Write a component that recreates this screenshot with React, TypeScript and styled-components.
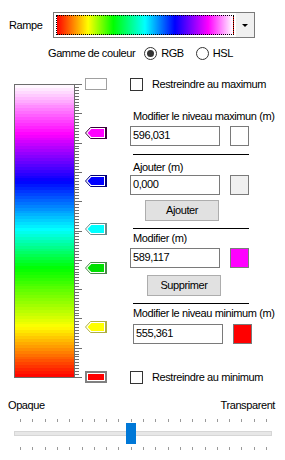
import React from 'react';
import styled, { createGlobalStyle } from 'styled-components';

const GlobalStyle = createGlobalStyle`
  body {
    margin: 0;
    background: #fff;
  }
  * {
    box-sizing: border-box;
  }
`;

// Fenêtre principale
const Window = styled.div`
  width: 285px;
  height: 460px;
  overflow: hidden;
  background: #fff;
  font-family: 'Liberation Sans', Arial, sans-serif;
  font-size: 11px;
  letter-spacing: -0.4px;
  line-height: 13px;
  color: #000;
  display: flex;
  flex-direction: column;
`;

const RampRow = styled.div`
  display: flex;
  align-items: center;
  padding: 12px 0 0 9px;
`;

const RampLabel = styled.span`
  width: 44px;
`;

const Combo = styled.div`
  width: 202px;
  height: 26px;
  border: 1px solid #7a7a7a;
  display: flex;
  align-items: stretch;
  background: #fff;
`;

const ComboPreview = styled.div`
  flex: 1;
  margin: 2px;
  border: 1px dotted #000;
  background: linear-gradient(
    to right,
    #ff0000 0%,
    #ffff00 17.7%,
    #00ff00 32%,
    #00ffff 50%,
    #0000ff 67%,
    #ff00ff 86%,
    #ffffff 100%
  );
`;

const ComboButton = styled.div`
  width: 18px;
  background: #f0f0f0;
  display: flex;
  align-items: center;
  justify-content: center;

  &::after {
    content: '';
    width: 0;
    height: 0;
    border-left: 3px solid transparent;
    border-right: 3px solid transparent;
    border-top: 3px solid #000;
  }
`;

const GammeRow = styled.div`
  display: flex;
  align-items: center;
  height: 13px;
  margin-top: 9px;
  padding-left: 48px;
`;

const RadioItem = styled.label<{ $first?: boolean }>`
  display: flex;
  align-items: center;
  gap: 4px;
  margin-left: ${(p) => (p.$first ? '9px' : '12px')};
`;

const RadioCircle = styled.span<{ $checked?: boolean }>`
  width: 13px;
  height: 13px;
  border: 1px solid #333;
  border-radius: 50%;
  display: flex;
  align-items: center;
  justify-content: center;
  background: #fff;

  &::after {
    content: '';
    width: 7px;
    height: 7px;
    border-radius: 50%;
    background: ${(p) => (p.$checked ? '#333' : 'transparent')};
  }
`;

const Main = styled.div`
  display: flex;
  margin-top: 18px;
  height: 310px;
`;

const ScaleArea = styled.div`
  position: relative;
  width: 130px;
  flex: none;
`;

const BarRow = styled.div`
  display: flex;
  margin: 6px 0 0 14px;
`;

const Bar = styled.div`
  width: 61px;
  height: 294px;
  border: 1px solid #6d6d6d;
`;

const Marker = styled.svg`
  position: absolute;
  left: 85px;
`;

const Panel = styled.div`
  display: flex;
  flex-direction: column;
  width: 155px;
`;

const CheckRow = styled.label<{ $top?: number }>`
  display: flex;
  align-items: center;
  height: 13px;
  margin-top: ${(p) => p.$top ?? 0}px;
`;

const CheckBox = styled.span`
  width: 13px;
  height: 13px;
  border: 1px solid #333;
  background: #fff;
  margin-right: 9px;
`;

const FieldLabel = styled.div<{ $top: number }>`
  margin-top: ${(p) => p.$top}px;
  padding-left: 3px;
`;

const FieldRow = styled.div<{ $top: number; $indent?: number }>`
  display: flex;
  align-items: stretch;
  margin-top: ${(p) => p.$top}px;
  padding-left: ${(p) => p.$indent ?? 0}px;
  height: 20px;
`;

const TextBox = styled.div`
  width: 90px;
  border: 1px solid #7a7a7a;
  background: #fff;
  padding: 2px 0 0 2px;
`;

const Swatch = styled.div<{ $color: string }>`
  width: 19px;
  margin-left: ${(p) => 10 - 0}px;
  border: 1px solid #7a7a7a;
  background: ${(p) => p.$color};
`;

const Separator = styled.div<{ $top: number }>`
  margin: ${(p) => p.$top}px 0 0 3px;
  width: 116px;
  height: 1px;
  background: #000;
`;

const Button = styled.button<{ $top: number; $indent: number }>`
  align-self: flex-start;
  margin: ${(p) => p.$top}px 0 0 ${(p) => p.$indent}px;
  width: 74px;
  height: 21px;
  padding: 0;
  border: 1px solid #adadad;
  background: #e1e1e1;
  font: inherit;
  letter-spacing: inherit;
  color: #000;
`;

const OpacityLabels = styled.div`
  display: flex;
  justify-content: space-between;
  margin-top: 11px;
  padding: 0 10px 0 8px;
`;

const Slider = styled.div`
  position: relative;
  display: flex;
  flex-direction: column;
  padding: 0 13px 0 14px;
`;

const SliderTicks = styled.svg<{ $top: number }>`
  display: block;
  margin-top: ${(p) => p.$top}px;
`;

const Track = styled.div`
  margin-top: 9px;
  height: 5px;
  border: 1px solid #d6d6d6;
  background: #e7e7e7;
`;

const Thumb = styled.div`
  position: absolute;
  top: 11px;
  width: 10px;
  height: 21px;
  background: #0078d7;
`;

// Palette de la rampe (haut -> bas)
const stops: [number, [number, number, number]][] = [
  [0, [255, 255, 255]],
  [0.167, [255, 0, 255]],
  [0.331, [0, 0, 255]],
  [0.495, [0, 255, 255]],
  [0.628, [0, 255, 0]],
  [0.829, [255, 255, 0]],
  [1, [255, 0, 0]],
];

const colorAt = (t: number) => {
  for (let i = 1; i < stops.length; i++) {
    const [p1, c1] = stops[i];
    const [p0, c0] = stops[i - 1];
    if (t <= p1) {
      const k = (t - p0) / (p1 - p0);
      const c = c0.map((v, j) => Math.round(v + (c1[j] - v) * k));
      return `rgb(${c[0]},${c[1]},${c[2]})`;
    }
  }
  return 'rgb(255,0,0)';
};

const bandedGradient = () => {
  const n = 100;
  const parts: string[] = [];
  for (let i = 0; i < n; i++) {
    const c = colorAt((i + 0.5) / n);
    parts.push(`${c} ${(i * 100) / n}%`, `${c} ${((i + 1) * 100) / n}%`);
  }
  return `linear-gradient(to bottom, ${parts.join(', ')})`;
};

const markers = [
  { pos: 0, color: '#ffffff', edge: '#a0a0a0', kind: 'end' },
  { pos: 0.167, color: '#ff00ff', edge: '#3a003a', kind: 'tab' },
  { pos: 0.331, color: '#0000ff', edge: '#00007a', kind: 'tab' },
  { pos: 0.495, color: '#00ffff', edge: '#6a8a8a', kind: 'tab' },
  { pos: 0.628, color: '#00e000', edge: '#4a8a4a', kind: 'tab' },
  { pos: 0.829, color: '#ffff00', edge: '#b0b040', kind: 'tab' },
  { pos: 1, color: '#ff0000', edge: '#808080', kind: 'sel' },
];

const ScaleTicks: React.FC = () => {
  const h = 293;
  const lines: string[] = [];
  for (let i = 0; i <= 100; i++) {
    const y = Math.round((i * h) / 100) + 0.5;
    const len = i % 10 === 0 ? 7 : 4;
    lines.push(`M0 ${y}H${len}`);
  }
  return (
    <svg width="8" height="294" style={{ display: 'block' }}>
      <path d={lines.join('')} stroke="#6d6d6d" strokeWidth="1" fill="none" />
    </svg>
  );
};

const MarkerShape: React.FC<{ m: (typeof markers)[number] }> = ({ m }) => {
  const top = 6 + Math.round(m.pos * 293) - 5;
  if (m.kind === 'end') {
    return (
      <Marker width="22" height="12" style={{ top: top - 1 }}>
        <rect x="0.5" y="0.5" width="21" height="11" fill="#fff" stroke={m.edge} />
      </Marker>
    );
  }
  if (m.kind === 'sel') {
    return (
      <Marker width="22" height="12" style={{ top: top - 1 }}>
        <rect x="1" y="1" width="20" height="10" fill="#fff" stroke={m.edge} strokeWidth="2" />
        <rect x="3" y="3" width="16" height="6" fill={m.color} />
      </Marker>
    );
  }
  return (
    <Marker width="22" height="12" style={{ top: top - 1 }}>
      <path d="M0.5 6L5.5 0.5H20.5V11.5H5.5Z" fill="#fff" stroke={m.edge} />
      <path d="M21 0V12" stroke={m.edge} strokeWidth="2" />
      <path d="M2.5 6L6.3 2H19V10H6.3Z" fill={m.color} />
    </Marker>
  );
};

const SliderTickRow: React.FC<{ top: number }> = ({ top }) => {
  const d: string[] = [];
  for (let i = 0; i <= 20; i++) {
    const x = Math.round(6 + i * 12.3) + 0.5;
    d.push(`M${x} 0V3`);
  }
  return (
    <SliderTicks $top={top} width="258" height="3">
      <path d={d.join('')} stroke="#9a9a9a" fill="none" />
    </SliderTicks>
  );
};

const App: React.FC = () => {
  const opacity = 9; // position du curseur (0..20)
  return (
    <Window>
      <GlobalStyle />
      <RampRow>
        <RampLabel>Rampe</RampLabel>
        <Combo>
          <ComboPreview />
          <ComboButton />
        </Combo>
      </RampRow>

      <GammeRow>
        <span>Gamme de couleur</span>
        <RadioItem $first>
          <RadioCircle $checked />
          RGB
        </RadioItem>
        <RadioItem>
          <RadioCircle />
          HSL
        </RadioItem>
      </GammeRow>

      <Main>
        <ScaleArea>
          <BarRow>
            <Bar style={{ background: bandedGradient() }} />
            <ScaleTicks />
          </BarRow>
          {markers.map((m, i) => (
            <MarkerShape key={i} m={m} />
          ))}
        </ScaleArea>

        <Panel>
          <CheckRow>
            <CheckBox />
            Restreindre au maximum
          </CheckRow>

          <FieldLabel $top={19}>Modifier le niveau maximun (m)</FieldLabel>
          <FieldRow $top={3}>
            <TextBox>596,031</TextBox>
            <Swatch $color="#ffffff" />
          </FieldRow>

          <Separator $top={8} />
          <FieldLabel $top={6}>Ajouter (m)</FieldLabel>
          <FieldRow $top={1}>
            <TextBox>0,000</TextBox>
            <Swatch $color="#f0f0f0" />
          </FieldRow>
          <Button $top={5} $indent={15}>Ajouter</Button>

          <Separator $top={7} />
          <FieldLabel $top={3}>Modifier (m)</FieldLabel>
          <FieldRow $top={3}>
            <TextBox>589,117</TextBox>
            <Swatch $color="#ff00ff" />
          </FieldRow>
          <Button $top={7} $indent={17}>Supprimer</Button>

          <Separator $top={7} />
          <FieldLabel $top={3}>Modifier le niveau minimum (m)</FieldLabel>
          <FieldRow $top={4} $indent={3}>
            <TextBox>555,361</TextBox>
            <Swatch $color="#ff0000" />
          </FieldRow>

          <CheckRow $top={27}>
            <CheckBox />
            Restreindre au minimum
          </CheckRow>
        </Panel>
      </Main>

      <OpacityLabels>
        <span>Opaque</span>
        <span>Transparent</span>
      </OpacityLabels>

      <Slider>
        <SliderTickRow top={7} />
        <Track />
        <SliderTickRow top={11} />
        <Thumb style={{ left: 14 + 6 + opacity * 12.3 - 5 }} />
      </Slider>
    </Window>
  );
};

export default App;
